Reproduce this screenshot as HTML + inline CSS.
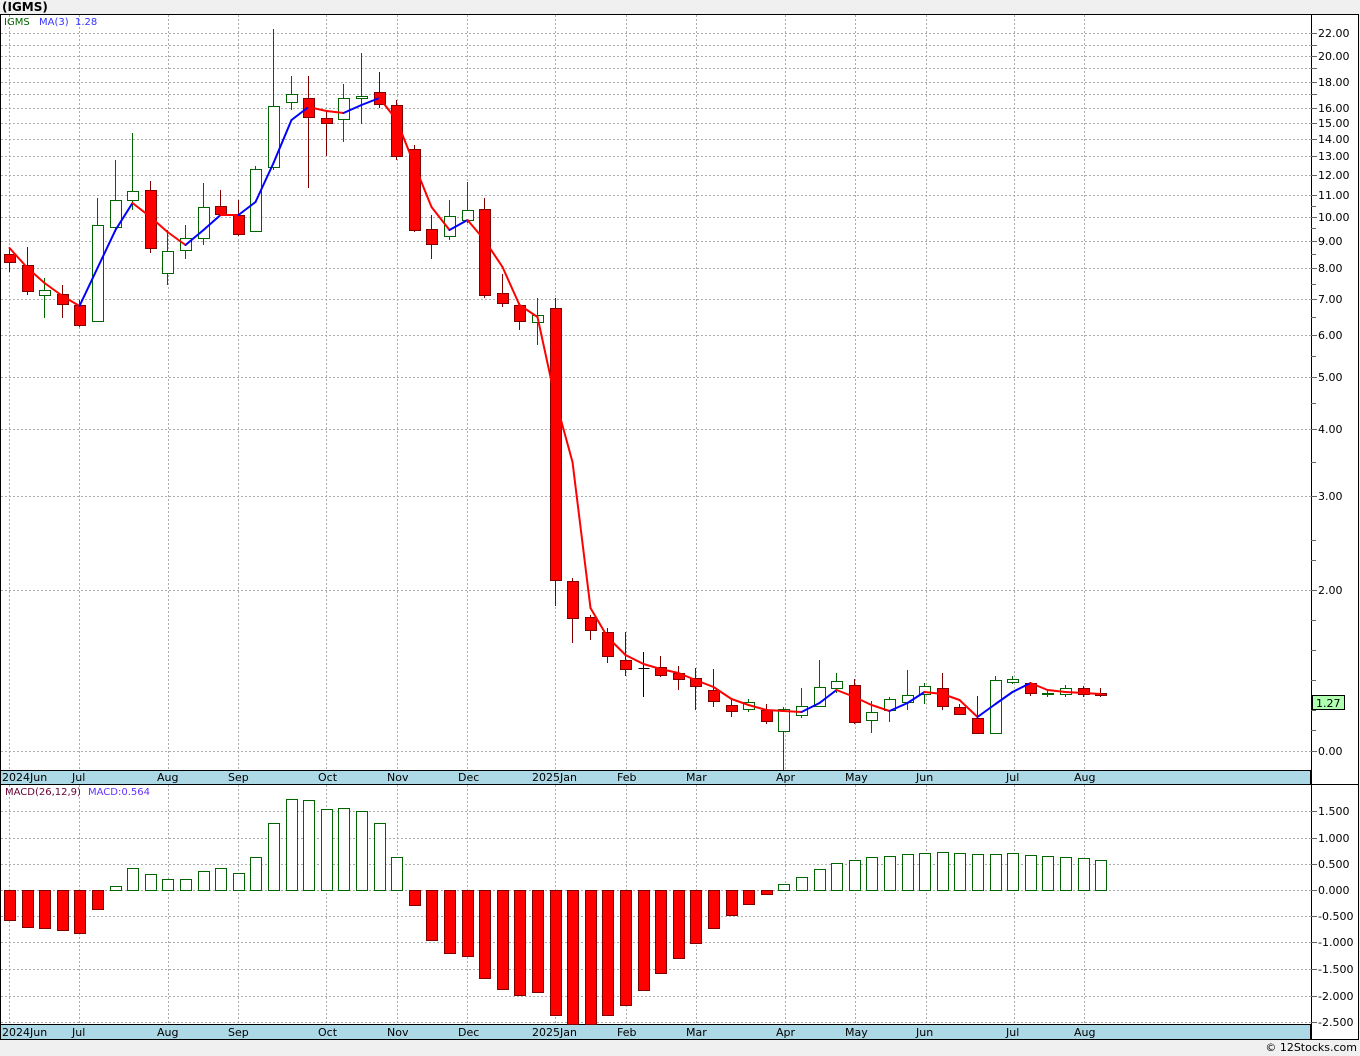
<!DOCTYPE html>
<html><head><meta charset="utf-8"><style>
body{margin:0;width:1360px;height:1056px;background:#f0f0f0;overflow:hidden;font-family:"DejaVu Sans","Liberation Sans",sans-serif}
#c{position:absolute;left:0;top:0}
</style></head><body>
<svg id="c" width="1360" height="1056" xmlns="http://www.w3.org/2000/svg" font-family="DejaVu Sans, Liberation Sans, sans-serif">
<rect x="0" y="0" width="1360" height="1056" fill="#f0f0f0"/>
<text x="2" y="11" font-size="12" font-weight="bold" fill="#000">(IGMS)</text>
<rect x="0.5" y="14.5" width="1358" height="1025" fill="#fff" stroke="#000"/>
<g id="grid" stroke="#aaa" stroke-dasharray="2,2" stroke-width="1"></g>
<rect x="0.5" y="770.5" width="1310" height="14" fill="#add8e6" stroke="#000"/>
<rect x="0.5" y="1024.5" width="1310" height="15" fill="#add8e6" stroke="#000"/>
<line x1="1311.5" y1="14" x2="1311.5" y2="1040" stroke="#000"/>
<line x1="1311" y1="784.5" x2="1359" y2="784.5" stroke="#000"/>
<g id="ticks" stroke="#666"></g>
<g id="plot"></g>
<g font-size="11" fill="#000">
<text x="1318" y="37">22.00</text><text x="1318" y="60">20.00</text><text x="1318" y="86">18.00</text><text x="1318" y="112">16.00</text><text x="1318" y="127">15.00</text><text x="1318" y="143">14.00</text><text x="1318" y="160">13.00</text><text x="1318" y="179">12.00</text><text x="1318" y="199">11.00</text><text x="1318" y="221">10.00</text><text x="1318" y="245">9.00</text><text x="1318" y="272">8.00</text><text x="1318" y="303">7.00</text><text x="1318" y="339">6.00</text><text x="1318" y="381">5.00</text><text x="1318" y="433">4.00</text><text x="1318" y="500">3.00</text><text x="1318" y="594">2.00</text><text x="1318" y="755">0.00</text>
<text x="1318" y="815">1.500</text><text x="1318" y="842">1.000</text><text x="1318" y="868">0.500</text><text x="1318" y="894">0.000</text><text x="1318" y="920">-0.500</text><text x="1318" y="946">-1.000</text><text x="1318" y="973">-1.500</text><text x="1318" y="1000">-2.000</text><text x="1318" y="1026">-2.500</text>
</g>
<rect x="1312.5" y="695.5" width="32" height="14" fill="#b0ffb0" stroke="#000"/>
<text x="1316" y="707" font-size="11">1.27</text>
<g font-size="10"><text x="4" y="25" fill="#006400">IGMS</text><text x="39" y="25" fill="#3333ff">MA(3)</text><text x="75" y="25" fill="#3333ff">1.28</text>
<text x="5" y="795" fill="#660033">MACD(26,12,9)</text><text x="88" y="795" fill="#6633ff">MACD:0.564</text></g>
<g id="dl" font-size="11" fill="#000"></g>
<text x="1357" y="1051" font-size="11" text-anchor="end">© 12Stocks.com</text>
</svg>
<script>
var ns="http://www.w3.org/2000/svg";
function el(p,t,a){var e=document.createElementNS(ns,t);for(var k in a)e.setAttribute(k,a[k]);p.appendChild(e);return e;}
var G=document.getElementById('grid'),T=document.getElementById('ticks'),P=document.getElementById('plot'),D=document.getElementById('dl');
var hy=[33,45,56,68,82,94,108,123,139,156,175,195,217,241,268,299,335,377,429,496,590,751,811,838,864,890,916,942,969,996,1022];
hy.forEach(function(y){el(G,'line',{x1:1,y1:y+.5,x2:1311,y2:y+.5});el(T,'line',{x1:1311,y1:y+.5,x2:1317,y2:y+.5});});
[206,228,254,284,317,356,403,462,540,560,620,650,680,710,730].forEach(function(y){el(T,'line',{x1:1311,y1:y+.5,x2:1316,y2:y+.5});});
var vx=[9,79,168,238,326,397,467,555,626,696,785,855,926,1014,1084];
vx.forEach(function(x){el(G,'line',{x1:x+.5,y1:15,x2:x+.5,y2:770});el(G,'line',{x1:x+.5,y1:785,x2:x+.5,y2:1024});});
var lab=[["2024Jun",2],["Jul",72],["Aug",157],["Sep",228],["Oct",318],["Nov",387],["Dec",458],["2025Jan",532],["Feb",617],["Mar",686],["Apr",776],["May",845],["Jun",916],["Jul",1006],["Aug",1074]];
lab.forEach(function(l){[781,1036].forEach(function(y){var t=el(D,'text',{x:l[1],y:y});t.textContent=l[0];});});
var C=[[254,262,247,272,'r'],[265,291,247,295,'r'],[295,290,278,318,'g'],[294,304,285,318,'r'],[305,325,300,327,'r'],[321,225,198,322,'g'],[227,200,160,232,'g'],[200,191,133,210,'g'],[190,248,181,253,'r'],[273,251,230,285,'g'],[250,238,225,259,'g'],[238,207,183,245,'g'],[206,214,190,216,'r'],[215,234,200,236,'r'],[231,169,166,232,'g'],[167,106,29,170,'g'],[102,94,76,110,'g'],[98,117,76,188,'r'],[118,123,112,156,'r'],[119,98,84,142,'g'],[98,96,53,124,'g'],[92,104,72,108,'r'],[105,156,100,160,'r'],[149,230,145,232,'r'],[229,244,215,259,'r'],[236,216,200,240,'g'],[220,210,182,223,'g'],[209,295,198,298,'r'],[293,303,274,307,'r'],[305,321,303,330,'r'],[322,315,298,345,'g'],[308,580,298,606,'r'],[581,618,578,643,'r'],[617,630,615,640,'r'],[632,656,628,663,'r'],[660,669,632,676,'r'],[668,668,652,697,'k'],[667,675,656,677,'r'],[673,679,666,690,'r'],[678,686,668,710,'r'],[690,701,669,707,'r'],[705,711,700,717,'r'],[709,702,699,712,'g'],[710,721,704,724,'r'],[731,709,707,770,'g'],[715,706,688,718,'g'],[706,687,660,707,'g'],[688,681,673,693,'g'],[685,722,679,724,'r'],[720,712,701,733,'g'],[710,699,697,722,'g'],[702,695,670,710,'g'],[694,686,683,704,'g'],[688,706,673,710,'r'],[707,714,704,715,'r'],[718,733,696,733,'r'],[733,680,676,734,'g'],[682,679,676,684,'g'],[683,693,682,696,'r'],[694,693,690,697,'g'],[694,688,685,697,'g'],[688,694,686,697,'r'],[693,695,688,697,'r']];
function X(i){return Math.round(9+17.6*i);}
C.forEach(function(c,i){var x=X(i)+.5;var wc=c[4]=='r'?'#800000':(c[4]=='g'?'#006400':'#000');
el(P,'line',{x1:x,y1:c[2],x2:x,y2:c[3],stroke:wc});
var t=Math.min(c[0],c[1]),b=Math.max(c[0],c[1]);
if(c[4]=='k'){el(P,'line',{x1:x-5,y1:t+.5,x2:x+6,y2:t+.5,stroke:'#000'});}
else el(P,'rect',{x:x-5,y:t+.5,width:11,height:Math.max(b-t,1),fill:c[4]=='r'?'#ff0000':'#fff',stroke:wc});});
var M=[248,268,283,296,306,268,230,203,217,232,245,230,215,215,202,163,120,107,111,113,105,98,120,165,207,230,220,240,267,305,317,400,462,608,637,655,664,669,673,680,687,699,705,710,711,712,703,690,697,705,711,703,692,694,700,717,704,692,683,690,692,693,694];
for(var i=0;i<M.length-1;i++){el(P,'line',{x1:X(i)+.5,y1:M[i],x2:X(i+1)+.5,y2:M[i+1],stroke:M[i+1]<M[i]?'#0000ff':'#ff0000','stroke-width':2,'stroke-linecap':'round'});}
var H=[920,927,928,930,933,909,886,868,874,879,879,871,868,873,857,823,799,800,809,808,811,823,857,905,940,953,956,978,989,995,992,1015,1024,1024,1015,1005,990,973,958,943,928,915,904,894,884,877,869,863,860,857,856,854,853,852,853,854,854,853,855,856,857,858,860];
H.forEach(function(h,i){var x=X(i)+.5;if(h>890)el(P,'rect',{x:x-5,y:890.5,width:11,height:h-890,fill:'#ff0000',stroke:'#800000'});else el(P,'rect',{x:x-5,y:h+.5,width:11,height:890-h,fill:'#fff',stroke:'#006400'});});
</script>
</body></html>
